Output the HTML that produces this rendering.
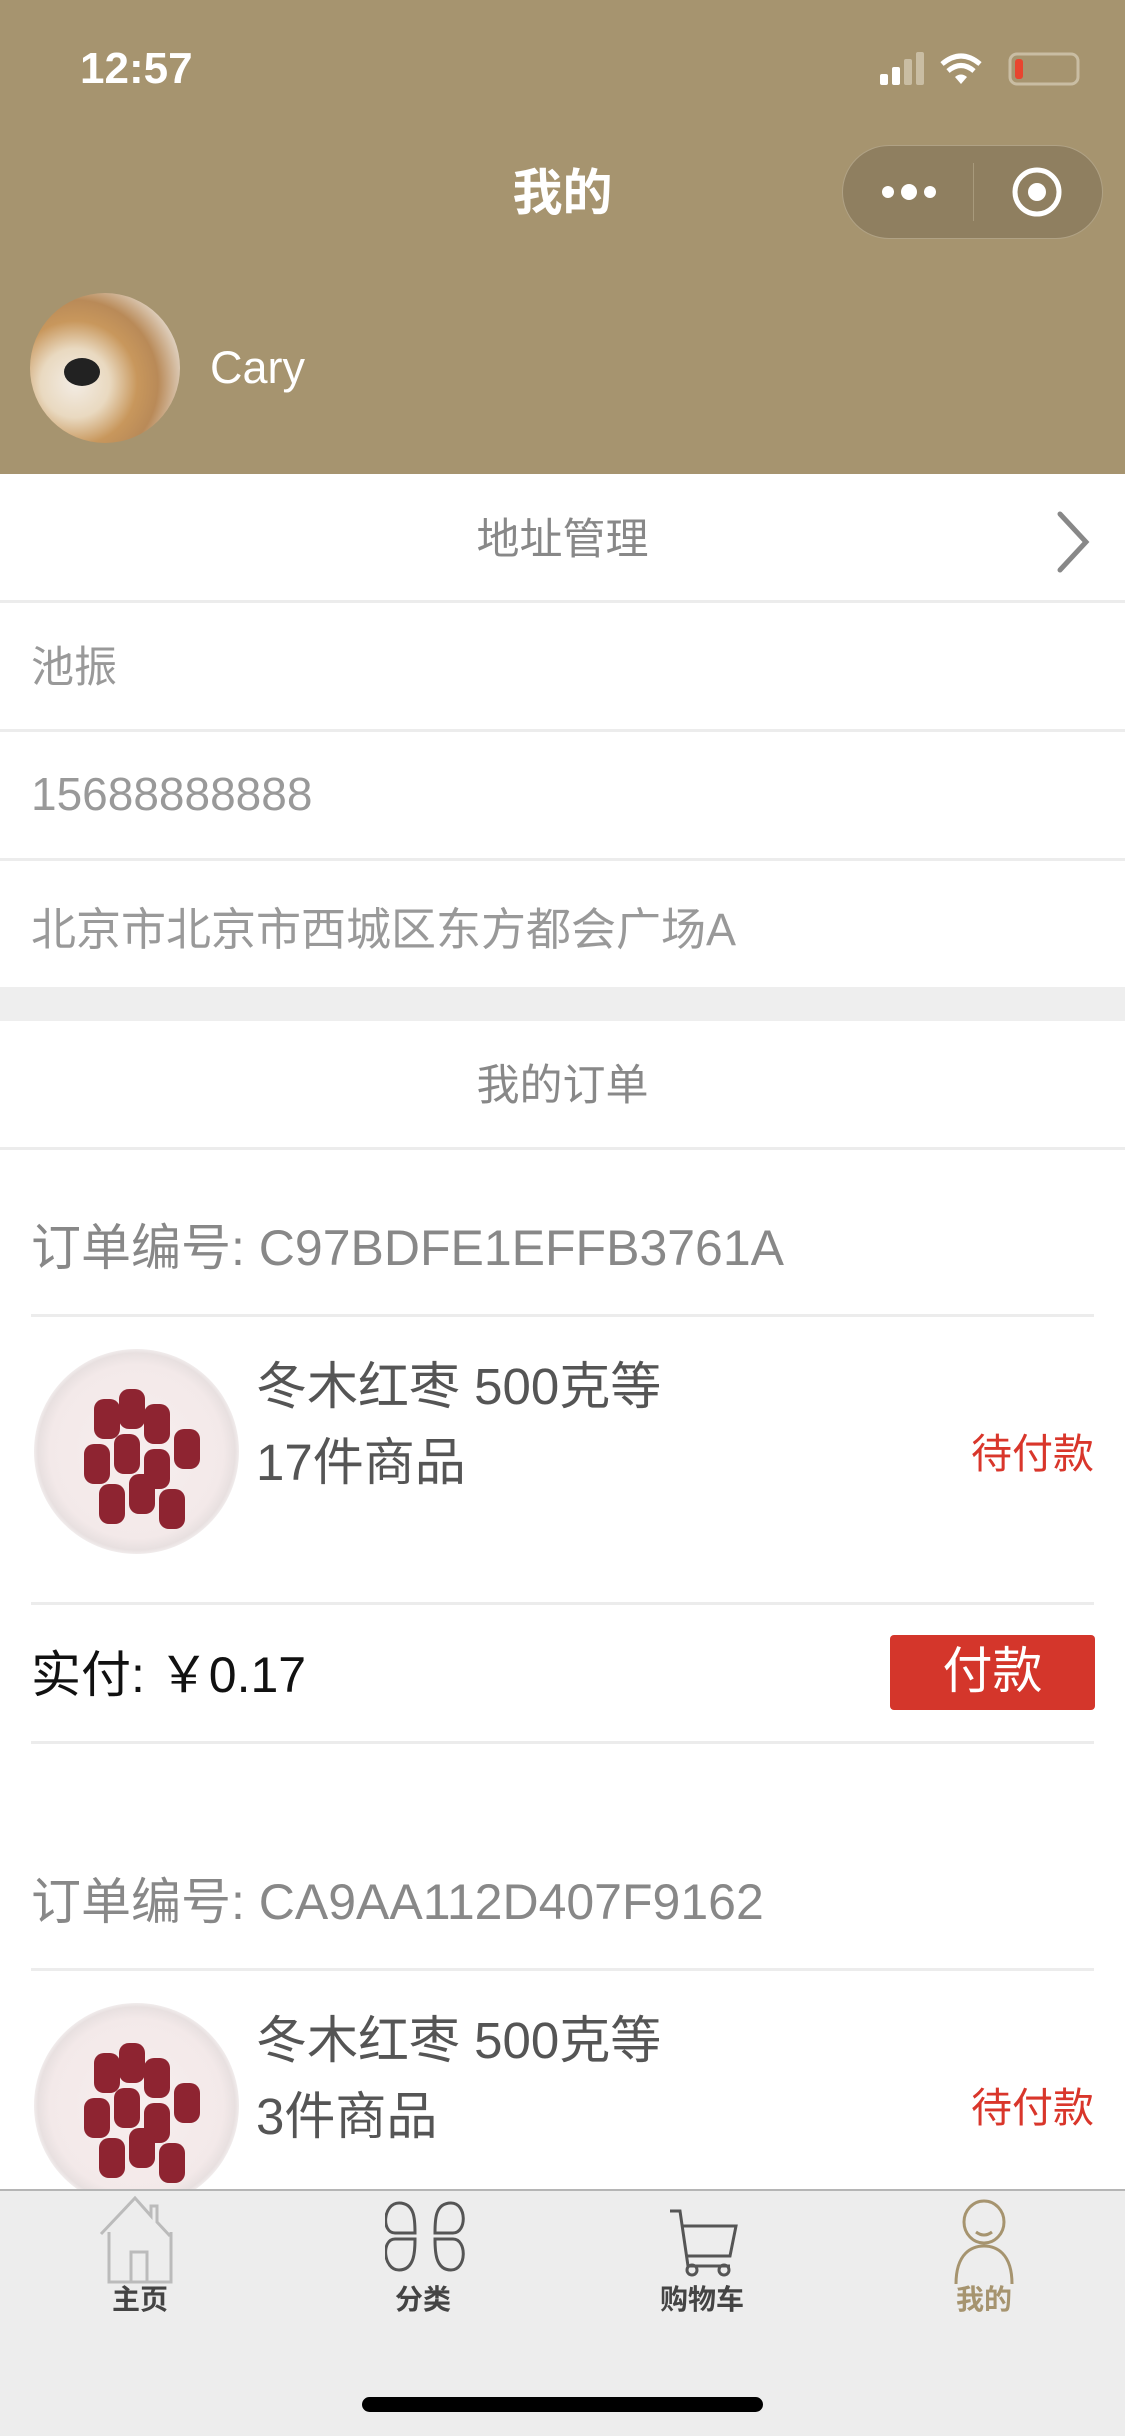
<!DOCTYPE html>
<html><head><meta charset="utf-8"><style>
*{margin:0;padding:0;box-sizing:border-box}
body{width:1125px;height:2436px;position:relative;overflow:hidden;background:#fff;font-family:"Liberation Sans","Noto Sans CJK SC",sans-serif}
.a{position:absolute;white-space:nowrap}
.hl{position:absolute;left:0;width:1125px;height:3px;background:#ececec}
.dl{position:absolute;left:31px;width:1063px;height:3px;background:#ececec}
.plate{position:absolute;width:205px;height:205px;border-radius:50%;background:radial-gradient(circle at 50% 50%,#f7eeee 0,#f3e9e9 60%,#e8e0e0 68%,#fff 75%);}
.plate i{position:absolute;width:26px;height:40px;border-radius:10px;background:#8e2431}
</style></head><body>
<div class="a" style="left:0;top:0;width:1125px;height:474px;background:#a6946f"></div>
<div class="a" style="left:80px;top:44px;font-size:44px;font-weight:bold;color:#fff">12:57</div>
<svg class="a" style="left:880px;top:50px" width="200" height="40" viewBox="0 0 200 40">
<rect x="0" y="24" width="8" height="11" rx="2" fill="#fff"/><rect x="12" y="17" width="8" height="18" rx="2" fill="#fff"/><rect x="24" y="9" width="8" height="26" rx="2" fill="#c9bda3"/><rect x="36" y="2" width="8" height="33" rx="2" fill="#c9bda3"/>
<path d="M62 14 Q81 -2 100 14" stroke="#fff" stroke-width="5" fill="none"/><path d="M68 21 Q81 10 94 21" stroke="#fff" stroke-width="5" fill="none"/><path d="M75 27 L81 34 L87 27 Q81 22 75 27Z" fill="#fff"/>
<rect x="130" y="4" width="68" height="30" rx="7" stroke="#c9bda3" stroke-width="3" fill="none"/><rect x="135" y="9" width="8" height="20" rx="3" fill="#e8452f"/>
</svg>
<div class="a" style="left:0;width:1125px;top:153px;text-align:center;font-size:50px;color:#fff;font-weight:bold">我的</div>
<div class="a" style="left:842px;top:145px;width:261px;height:94px;border-radius:47px;background:#8f7f60;border:1px solid #b0a285"></div>
<div class="a" style="left:973px;top:163px;width:1px;height:58px;background:#a89a7c"></div>
<svg class="a" style="left:880px;top:180px" width="60" height="24"><circle cx="8" cy="12" r="6" fill="#fff"/><circle cx="29" cy="12" r="8" fill="#fff"/><circle cx="50" cy="12" r="6" fill="#fff"/></svg>
<svg class="a" style="left:1010px;top:165px" width="55" height="55"><circle cx="27" cy="27" r="22" stroke="#fff" stroke-width="5" fill="none"/><circle cx="27" cy="27" r="9" fill="#fff"/></svg>
<div class="a" style="left:30px;top:293px;width:150px;height:150px;border-radius:50%;background:radial-gradient(circle at 30% 60%,#f3ece4 0,#e9d9c0 25%,#c8975c 45%,#b98a58 60%,#e2d5c6 80%)"></div>
<div class="a" style="left:64px;top:358px;width:36px;height:28px;border-radius:50%;background:#222"></div>
<div class="a" style="left:210px;top:342px;font-size:45px;color:#fff">Cary</div>

<div class="a" style="left:0;width:1125px;top:505px;text-align:center;font-size:43px;color:#888">地址管理</div>
<svg class="a" style="left:1052px;top:510px" width="45" height="64"><path d="M8 4 L34 32 L8 60" stroke="#888" stroke-width="5" fill="none" stroke-linecap="round"/></svg>
<div class="hl" style="top:600px"></div>
<div class="a" style="left:31px;top:633px;font-size:43px;color:#999">池振</div>
<div class="hl" style="top:729px"></div>
<div class="a" style="left:31px;top:767px;font-size:46px;color:#999">15688888888</div>
<div class="hl" style="top:858px"></div>
<div class="a" style="left:31px;top:893px;font-size:45px;color:#999">北京市北京市西城区东方都会广场A</div>
<div class="a" style="left:0;top:987px;width:1125px;height:34px;background:#eeeeee"></div>
<div class="a" style="left:0;width:1125px;top:1051px;text-align:center;font-size:43px;color:#888">我的订单</div>
<div class="hl" style="top:1147px"></div>

<div class="a" style="left:31px;top:1208px;font-size:50px;color:#888">订单编号: C97BDFE1EFFB3761A</div>
<div class="dl" style="top:1314px"></div>
<div class="plate" style="left:34px;top:1349px"><i style="left:60px;top:50px"></i><i style="left:85px;top:40px"></i><i style="left:110px;top:55px"></i><i style="left:50px;top:95px"></i><i style="left:80px;top:85px"></i><i style="left:110px;top:100px"></i><i style="left:140px;top:80px"></i><i style="left:65px;top:135px"></i><i style="left:95px;top:125px"></i><i style="left:125px;top:140px"></i></div>
<div class="a" style="left:256px;top:1345px;font-size:51px;color:#555">冬木红枣 500克等</div>
<div class="a" style="left:256px;top:1421px;font-size:51px;color:#555">17件商品</div>
<div class="a" style="right:31px;top:1420px;font-size:41px;color:#d9362b">待付款</div>
<div class="dl" style="top:1602px"></div>
<div class="a" style="left:31px;top:1635px;font-size:50px;color:#111">实付: ￥0.17</div>
<div class="a" style="left:890px;top:1635px;width:205px;height:75px;background:#d4362b;border-radius:4px;color:#fff;font-size:50px;text-align:center;line-height:72px">付款</div>
<div class="dl" style="top:1741px"></div>

<div class="a" style="left:31px;top:1862px;font-size:50px;color:#888">订单编号: CA9AA112D407F9162</div>
<div class="dl" style="top:1968px"></div>
<div class="plate" style="left:34px;top:2003px"><i style="left:60px;top:50px"></i><i style="left:85px;top:40px"></i><i style="left:110px;top:55px"></i><i style="left:50px;top:95px"></i><i style="left:80px;top:85px"></i><i style="left:110px;top:100px"></i><i style="left:140px;top:80px"></i><i style="left:65px;top:135px"></i><i style="left:95px;top:125px"></i><i style="left:125px;top:140px"></i></div>
<div class="a" style="left:256px;top:1999px;font-size:51px;color:#555">冬木红枣 500克等</div>
<div class="a" style="left:256px;top:2075px;font-size:51px;color:#555">3件商品</div>
<div class="a" style="right:31px;top:2074px;font-size:41px;color:#d9362b">待付款</div>

<div class="a" style="left:0;top:2189px;width:1125px;height:247px;background:#ededed;border-top:2px solid #b5b5b5"></div>
<svg class="a" style="left:95px;top:2196px" width="90" height="90" viewBox="0 0 90 90"><path d="M6 38 L40 2 L56 20 L56 10 L62 10 L62 26 L75 40 M14 36 L14 86 L76 86 L76 36 M36 86 L36 56 L52 56 L52 86" stroke="#bbb" stroke-width="3" fill="none"/></svg>
<svg class="a" style="left:385px;top:2200px" width="80" height="75" viewBox="0 0 80 75"><path d="M10 33 C-4 33 -2 3 14 3 C30 3 30 20 30 33 Z M50 33 C50 20 50 3 66 3 C82 3 82 33 68 33 Z M10 39 C-4 39 -2 70 14 70 C30 70 30 50 30 39 Z M50 39 C50 50 50 70 66 70 C82 70 82 39 68 39 Z" stroke="#555" stroke-width="3" fill="none"/></svg>
<svg class="a" style="left:668px;top:2208px" width="70" height="70" viewBox="0 0 70 70"><path d="M2 3 L12 3 L20 58 L62 58 M14 18 L68 18 L62 48 L18 48" stroke="#555" stroke-width="3" fill="none"/><circle cx="24" cy="62" r="5" stroke="#555" stroke-width="3" fill="none"/><circle cx="56" cy="62" r="5" stroke="#555" stroke-width="3" fill="none"/></svg>
<svg class="a" style="left:952px;top:2198px" width="64" height="90" viewBox="0 0 64 90"><ellipse cx="32" cy="24" rx="20" ry="21" stroke="#a6946f" stroke-width="3" fill="none"/><path d="M24 34 Q32 40 40 34" stroke="#a6946f" stroke-width="3" fill="none"/><path d="M4 86 C4 55 20 48 32 48 C44 48 60 55 60 86" stroke="#a6946f" stroke-width="3" fill="none"/></svg>
<div class="a" style="left:90px;width:100px;top:2278px;text-align:center;font-size:28px;color:#444;font-weight:bold">主页</div>
<div class="a" style="left:373px;width:100px;top:2278px;text-align:center;font-size:28px;color:#444;font-weight:bold">分类</div>
<div class="a" style="left:642px;width:120px;top:2278px;text-align:center;font-size:28px;color:#444;font-weight:bold">购物车</div>
<div class="a" style="left:934px;width:100px;top:2278px;text-align:center;font-size:28px;color:#a6946f;font-weight:bold">我的</div>
<div class="a" style="left:362px;top:2397px;width:401px;height:15px;border-radius:8px;background:#000"></div>
</body></html>
